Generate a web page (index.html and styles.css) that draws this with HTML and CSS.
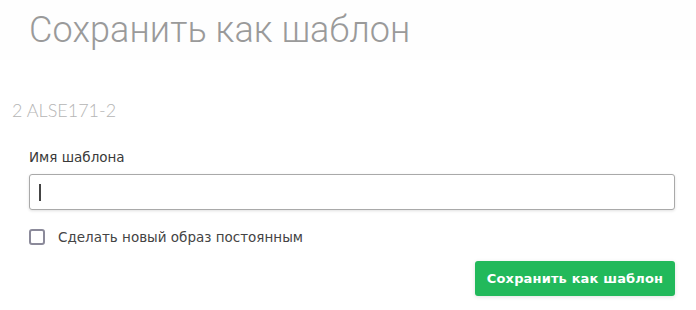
FILE: index.html
```html
<!DOCTYPE html>
<html lang="ru">
<head>
<meta charset="utf-8">
<link rel="stylesheet" href="styles.css">
</head>
<body>
<div class="page">
  <h1 class="title">Сохранить как шаблон</h1>
  <div class="panel">
    <div class="subtitle">2 ALSE171-2</div>
    <form class="form">
      <label class="label" for="tpl">Имя шаблона</label>
      <div class="input"><span class="caret"></span></div>
      <label class="check">
        <span class="box"></span>
        <span class="check-text">Сделать новый образ постоянным</span>
      </label>
      <div class="actions">
        <button type="button" class="btn">Сохранить как шаблон</button>
      </div>
    </form>
  </div>
</div>
</body>
</html>
```
FILE: styles.css
```css
* { box-sizing: border-box; }
html, body { margin: 0; padding: 0; }
body {
  width: 696px;
  height: 310px;
  background: #fefefe;
  overflow: hidden;
}
.page { display: flex; flex-direction: column; height: 310px; }
.title {
  margin: 0;
  padding: 8px 0 0 29px;
  height: 60px;
  font-family: Roboto, sans-serif;
  font-weight: 300;
  font-size: 36px;
  line-height: 44px;
  color: #9a9a9a;
  letter-spacing: 0.1px;
}
.panel {
  background: #ffffff;
  padding: 40px 0 0 12px;
  flex: 1;
}
.subtitle {
  font-family: Lato, sans-serif;
  font-weight: 300;
  font-size: 18px;
  line-height: 20px;
  color: #b5b5b5;
}
.form {
  display: flex;
  flex-direction: column;
  padding: 29px 21px 0 17px;
}
.label {
  font-family: "DejaVu Sans", sans-serif;
  font-size: 13.5px;
  line-height: 16px;
  color: #3a3a3a;
}
.input {
  margin-top: 9px;
  height: 36px;
  border: 1px solid #a9a9a9;
  border-radius: 3px;
  background: #fff;
  box-shadow: 0 1px 3px rgba(0,0,0,0.12);
  display: flex;
  align-items: center;
  padding-left: 9px;
}
.caret {
  width: 2px;
  height: 17px;
  background: #444;
}
.check {
  margin-top: 19px;
  display: flex;
  align-items: center;
  gap: 13px;
}
.box {
  width: 16px;
  height: 16px;
  border: 2px solid #8b8a9a;
  border-radius: 3px;
  background: #fff;
}
.check-text {
  font-family: "DejaVu Sans", sans-serif;
  font-size: 13.5px;
  color: #444;
}
.actions {
  display: flex;
  justify-content: flex-end;
  margin-top: 16px;
}
.btn {
  width: 200px;
  height: 35px;
  border: none;
  border-radius: 3px;
  background: #22b95b;
  color: #fff;
  font-family: "DejaVu Sans", sans-serif;
  font-weight: bold;
  font-size: 13px;
  letter-spacing: 0.15px;
  box-shadow: 0 1px 4px rgba(0,0,0,0.12);
  padding: 0;
}
```
